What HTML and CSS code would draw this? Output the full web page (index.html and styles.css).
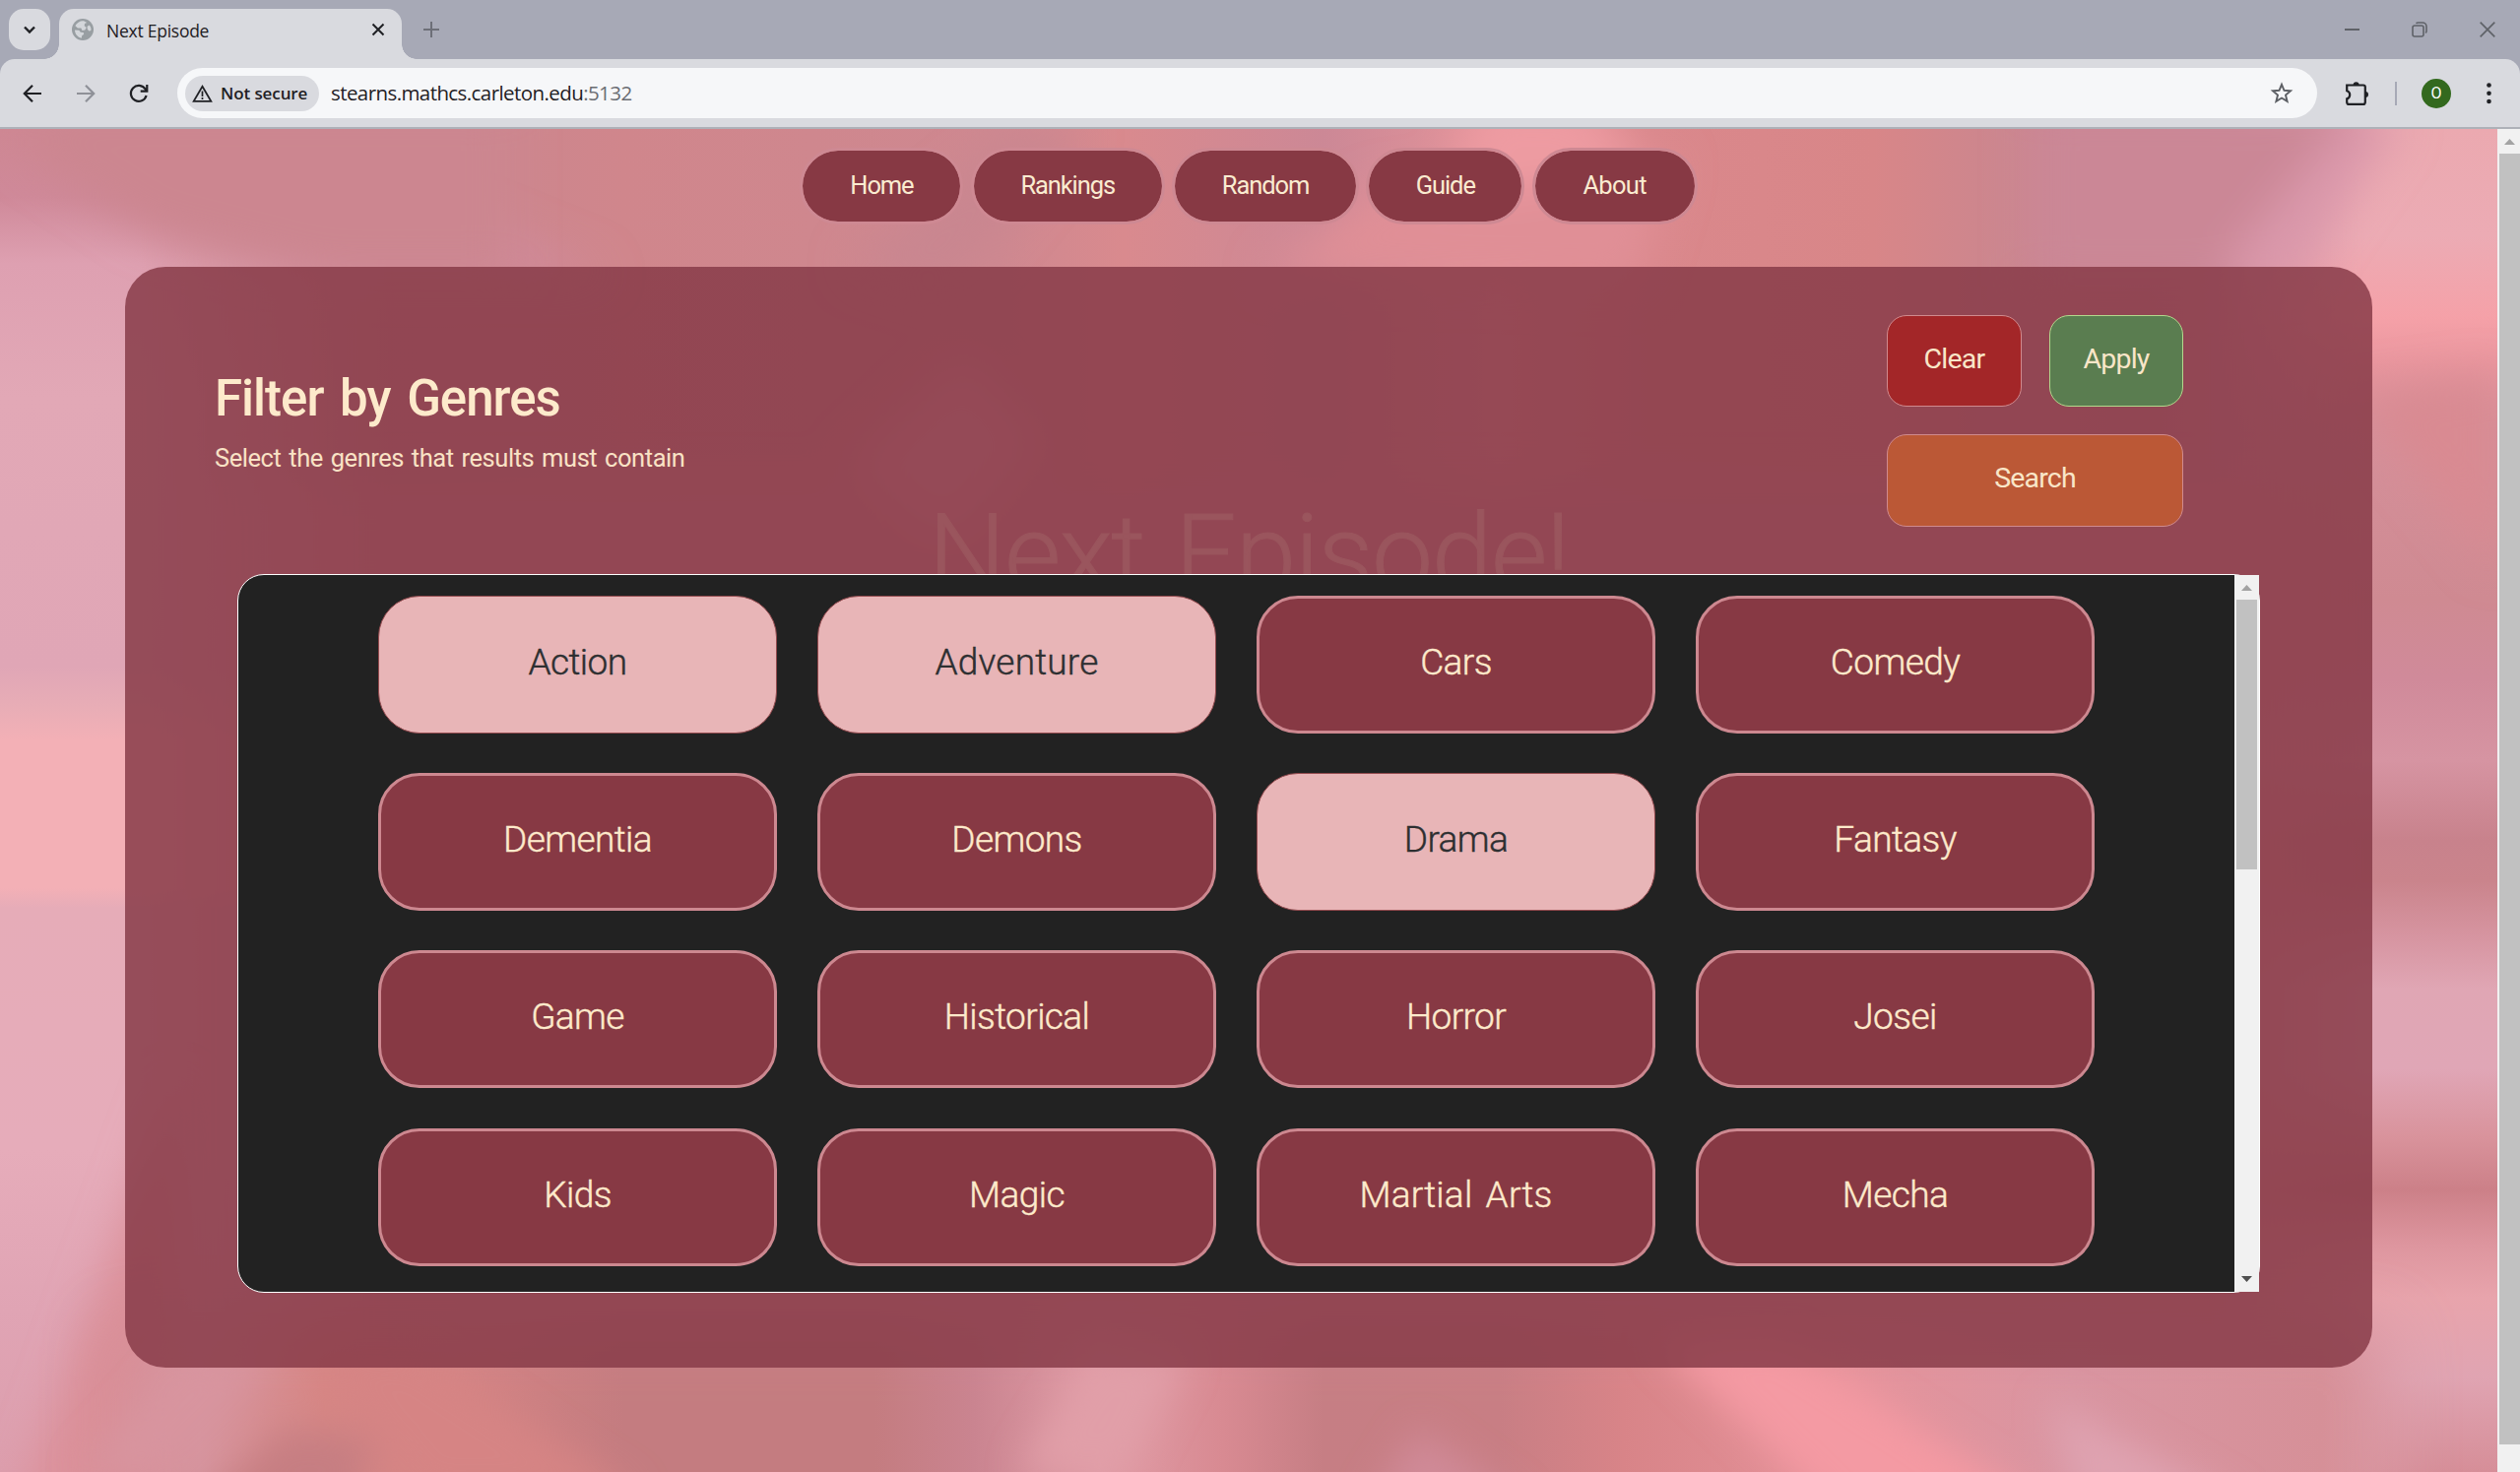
FILE: index.html
```html
<!DOCTYPE html>
<html lang="en">
<head>
<meta charset="utf-8">
<title>Next Episode</title>
<link rel="stylesheet" href="styles.css">
</head>
<body>
<div class="browser">
  <div class="tabstrip">
    <div class="tab-search"><svg width="14" height="14" viewBox="0 0 14 14"><path d="M2 4.500l5 5 5-5" fill="none" stroke="#1f2024" stroke-width="2.400"/></svg></div>
    <div class="tab">
      <svg class="globe" width="22" height="22" viewBox="0 0 22 22"><circle cx="11" cy="11" r="11" fill="#989ea2"/><path d="M12 2.200c-3.400-.4-7 1.700-8.600 5l2.500 2.200 3.400.2 1.200 2.300 2.800-.4 1.400-2.600-2-1.600.3-2.400 2.200-.8zM3 11.500c0 4 2.900 7.500 6.800 8.200l.4-2.400 2-1.500-.5-1.700-2.900-.4-1.500-2zM17.500 6.500l-2 1.500.4 3 2 1.700 1.600-1.200c.1-1.900-.6-3.800-2-5z" fill="#d3d6da"/></svg>
      <span class="tab-title">Next Episode</span>
      <svg class="tab-close" width="14" height="14" viewBox="0 0 14 14"><path d="M1.500 1.500l11 11M12.500 1.500l-11 11" stroke="#1f2024" stroke-width="2"/></svg>
    </div>
    <svg class="new-tab" width="16" height="16" viewBox="0 0 16 16"><path d="M8 0v16M0 8h16" stroke="#6d6f78" stroke-width="2"/></svg>
    <div class="window-buttons">
      <svg width="16" height="16" viewBox="0 0 16 16"><path d="M1 8h15" stroke="#5f6268" stroke-width="2"/></svg>
      <svg width="16" height="16" viewBox="0 0 16 16"><rect x="1" y="4" width="11" height="11" rx="2" fill="none" stroke="#5f6268" stroke-width="1.600"/><path d="M4.500 1.800C5 1.200 5.800 1 6.500 1H11a4 4 0 0 1 4 4v4.500c0 .8-.3 1.500-.9 2" fill="none" stroke="#5f6268" stroke-width="1.600"/></svg>
      <svg width="16" height="16" viewBox="0 0 16 16"><path d="M.7.7l14.600 14.600M15.300.7L.7 15.300" stroke="#5f6268" stroke-width="1.700"/></svg>
    </div>
  </div>
  <div class="toolbar">
    <div class="nav-buttons">
      <svg width="20" height="20" viewBox="0 0 20 20"><path d="M19 10H2.500M10 1.800L1.800 10l8.200 8.200" fill="none" stroke="#1f2024" stroke-width="2.200"/></svg>
      <svg width="20" height="20" viewBox="0 0 20 20"><path d="M1 10h16.500M10 1.800l8.200 8.200-8.200 8.200" fill="none" stroke="#8f9198" stroke-width="2.200"/></svg>
      <svg width="20" height="20" viewBox="0 0 20 20"><path d="M17.600 12A8 8 0 1 1 16.600 5.500L18 7.200M18.300 1v6.700h-6.600" fill="none" stroke="#1f2024" stroke-width="2.200"/></svg>
    </div>
    <div class="omnibox">
      <div class="chip">
        <svg width="21" height="18" viewBox="0 0 21 18"><path d="M10.500 1.800L19.300 16.800H1.700z" fill="none" stroke="#1f2024" stroke-width="1.800"/><path d="M10.500 6.500v5.500M10.500 13v2" stroke="#1f2024" stroke-width="1.700"/></svg>
        <span>Not secure</span>
      </div>
      <div class="url">stearns.mathcs.carleton.edu<span class="port">:5132</span></div>
      <svg class="star" width="24" height="23" viewBox="0 0 24 23"><path d="M12 2.800l2.500 6 6.500.5-5 4.200 1.600 6.400L12 16.500l-5.600 3.400L8 13.500 3 9.300l6.500-.5z" fill="none" stroke="#5c5f64" stroke-width="1.900"/></svg>
    </div>
    <div class="toolbar-right">
      <svg width="25" height="26" viewBox="0 0 25 26"><path d="M2.200 4.500H19a1.800 1.800 0 0 1 1.800 1.800v15.800a1.800 1.800 0 0 1-1.800 1.800H4a1.800 1.800 0 0 1-1.800-1.800v-3.700a4.300 4.300 0 0 0 0-8.200z" fill="none" stroke="#1f2024" stroke-width="2.200"/><path d="M8.600 4.300a3 3 0 0 1 6 0zM21 11a3 3 0 0 1 0 6z" fill="#1f2024"/></svg>
      <i class="divider"></i>
      <span class="avatar">O</span>
      <svg class="kebab" width="5" height="22" viewBox="0 0 5 22"><circle cx="2.500" cy="2.500" r="2.300"/><circle cx="2.500" cy="10.800" r="2.300"/><circle cx="2.500" cy="19" r="2.300"/></svg>
    </div>
  </div>
</div>

<div class="viewport">
  <main class="page">
    <svg class="backdrop" width="2536" height="1364" viewBox="0 0 2536 1364" preserveAspectRatio="none">
      <defs>
        <linearGradient id="gl" x1="0" y1="0" x2="0" y2="1"><stop offset="0" stop-color="#ce8793"/><stop offset=".05" stop-color="#cf8999"/><stop offset=".1" stop-color="#dea0b1"/><stop offset=".2" stop-color="#e2a8b6"/><stop offset=".4" stop-color="#e0a6b6"/><stop offset=".43" stop-color="#e8adb6"/><stop offset=".455" stop-color="#f3b0b6"/><stop offset=".565" stop-color="#f3b0b6"/><stop offset=".58" stop-color="#e6acb8"/><stop offset=".76" stop-color="#e6acba"/><stop offset=".88" stop-color="#e0a4b4"/><stop offset="1" stop-color="#dc9ead"/></linearGradient>
        <linearGradient id="gr" x1="0" y1="0" x2="0" y2="1"><stop offset="0" stop-color="#eba9b0"/><stop offset=".08" stop-color="#ecabb4"/><stop offset=".14" stop-color="#f5a1a8"/><stop offset=".175" stop-color="#e9969e"/><stop offset=".22" stop-color="#d5909a"/><stop offset=".35" stop-color="#cf8a92"/><stop offset=".41" stop-color="#d08a9a"/><stop offset=".47" stop-color="#d694a2"/><stop offset=".53" stop-color="#c8828c"/><stop offset=".56" stop-color="#ca848c"/><stop offset=".6" stop-color="#d694a0"/><stop offset=".64" stop-color="#e0a6b4"/><stop offset=".7" stop-color="#e0a6b6"/><stop offset=".75" stop-color="#d9939c"/><stop offset=".79" stop-color="#cc8088"/><stop offset=".83" stop-color="#dd959e"/><stop offset=".87" stop-color="#e8a4ac"/><stop offset=".93" stop-color="#e0a4b2"/><stop offset="1" stop-color="#d68e98"/></linearGradient>
        <linearGradient id="gt"><stop offset="0" stop-color="#d08a9a"/><stop offset=".08" stop-color="#c9838a"/><stop offset=".17" stop-color="#ca868e"/><stop offset=".25" stop-color="#d0868c"/><stop offset=".4" stop-color="#ce8890"/><stop offset=".45" stop-color="#d98a8e"/><stop offset=".53" stop-color="#cc8896"/><stop offset=".6" stop-color="#e4949a"/><stop offset=".66" stop-color="#da888c"/><stop offset=".75" stop-color="#d88688"/><stop offset=".8" stop-color="#cc868e"/><stop offset=".86" stop-color="#c88490"/><stop offset=".91" stop-color="#d08ea2"/><stop offset=".95" stop-color="#dc9aaa"/><stop offset="1" stop-color="#eeaab2"/></linearGradient>
        <linearGradient id="gb"><stop offset="0" stop-color="#e2a4b2"/><stop offset=".03" stop-color="#d68c94"/><stop offset=".08" stop-color="#d6949e"/><stop offset=".13" stop-color="#d68684"/><stop offset=".18" stop-color="#d48484"/><stop offset=".25" stop-color="#c47c80"/><stop offset=".35" stop-color="#c47c80"/><stop offset=".39" stop-color="#ca8490"/><stop offset=".44" stop-color="#e09ca6"/><stop offset=".49" stop-color="#d88a92"/><stop offset=".53" stop-color="#c67e84"/><stop offset=".6" stop-color="#c87e84"/><stop offset=".65" stop-color="#d88488"/><stop offset=".74" stop-color="#e5939b"/><stop offset=".83" stop-color="#d995a1"/><stop offset=".93" stop-color="#d69098"/><stop offset="1" stop-color="#e0a6b4"/></linearGradient>
        <linearGradient id="fl"><stop offset="0" stop-color="#fff"/><stop offset=".35" stop-color="#fff"/><stop offset="1" stop-color="#000"/></linearGradient>
        <linearGradient id="fr"><stop offset="0" stop-color="#000"/><stop offset=".55" stop-color="#fff"/><stop offset="1" stop-color="#fff"/></linearGradient>
        <filter id="soft" x="-20%" y="-20%" width="140%" height="140%"><feGaussianBlur stdDeviation="22"/></filter>
        <filter id="fine" x="-20%" y="-20%" width="140%" height="140%"><feGaussianBlur stdDeviation="18"/></filter>
        <filter id="wide" x="-20%" y="-50%" width="140%" height="200%"><feGaussianBlur stdDeviation="32"/></filter>
        <mask id="ml"><rect width="400" height="1364" fill="url(#fl)"/></mask>
        <mask id="mr"><rect x="2240" width="296" height="1364" fill="url(#fr)"/></mask>
        <mask id="mb"><rect x="110" y="1215" width="2320" height="320" fill="#fff" filter="url(#wide)"/></mask>
      </defs>
      <rect width="2536" height="1364" fill="#d68c96"/>
      <rect width="2536" height="420" fill="url(#gt)"/>
      <g filter="url(#soft)">
        <path d="M100 360H2400V480H100z" fill="#d48a94"/>
        <path d="M860 140L1040 0H1100L960 170z" fill="#c98690"/>
        <path d="M1280 150L1400 60 1700 30 1660 160z" fill="#e08f96"/>
        <path d="M1500 -30h110l60 70-200 30z" fill="#ee9ba2"/>
        <path d="M200 150L420 70 620 150z" fill="#d18b9c"/>
        <path d="M860 340L980 230 1060 320 960 420z" fill="#e09aa6"/>
      </g>
      <rect y="0" width="400" height="1364" fill="url(#gl)" mask="url(#ml)"/>
      <g filter="url(#soft)"><path d="M60 -30H520V150H330L150 105 20 20z" fill="#cc8690"/></g>
      <rect x="2240" width="296" height="1364" fill="url(#gr)" mask="url(#mr)"/>
      <g filter="url(#soft)">
        <path d="M2060 -30h350l-60 90-90 100h-200z" fill="#cb8796"/>
        <path d="M2536 250v200l-90-110-60-70z" fill="#d98a92"/>
        <path d="M2380 -10h60l-110 160h-80z" fill="#da98ab"/>
        <path d="M180 960v440H20z" fill="#dc9099"/>
      </g>
      <g mask="url(#mb)"><rect width="2536" y="1100" height="264" fill="url(#gb)"/></g>
      <g filter="url(#fine)">
        <path d="M190 1245h90l-120 120H80z" fill="#d8949f"/>
        <path d="M310 1240h110l230 150H430z" fill="#d68484"/>
        <path d="M290 1320l90 10-20 70H200z" fill="#c67e82"/>
        <path d="M1110 1245h95l-60 120h-110z" fill="#e19fa8"/>
        <path d="M1440 1320l110 80h-160z" fill="#d08a98"/>
        <path d="M1680 1230h130l280 180h-220z" fill="#f49aa3"/>
        <path d="M2080 1290l200 110h-170z" fill="#dfa3b1"/>
      </g>
    </svg>
    <div class="content">
      <nav class="menu">
        <a>Home</a><a>Rankings</a><a>Random</a><a>Guide</a><a>About</a>
      </nav>
      <section class="panel">
        <div class="hero-title">Next Episode!</div>
        <header class="panel-head">
          <div>
            <h1>Filter by Genres</h1>
            <p>Select the genres that results must contain</p>
          </div>
          <div class="actions">
            <button class="act clear">Clear</button>
            <button class="act apply">Apply</button>
            <button class="act search">Search</button>
          </div>
        </header>
        <div class="list">
          <div class="grid">
            <div class="tile on">Action</div><div class="tile on wide">Adventure</div><div class="tile">Cars</div><div class="tile">Comedy</div>
            <div class="tile">Dementia</div><div class="tile">Demons</div><div class="tile on">Drama</div><div class="tile">Fantasy</div>
            <div class="tile">Game</div><div class="tile">Historical</div><div class="tile">Horror</div><div class="tile">Josei</div>
            <div class="tile">Kids</div><div class="tile">Magic</div><div class="tile wide">Martial Arts</div><div class="tile">Mecha</div>
          </div>
          <div class="scroll inner"><i class="up"></i><i class="thumb"></i><i class="down"></i></div>
        </div>
      </section>
    </div>
  </main>
  <div class="scroll outer"><i class="up"></i><i class="thumb"></i></div>
</div>
</body>
</html>
```
FILE: styles.css
```css
* { box-sizing: border-box; }
html, body { height: 100%; }
body {
  margin: 0;
  display: flex;
  flex-direction: column;
  overflow: hidden;
  background: #d0868e;
  font-family: Roboto, "Liberation Sans", sans-serif;
}
svg { display: block; flex: none; }

/* browser chrome */
.browser { flex: none; height: 131px; background: #a7a9b6; font-family: "Open Sans", "Noto Sans", sans-serif; color: #1f2024; }
.tabstrip { height: 60px; display: flex; padding: 9px 0 0 9px; }
.tab-search { width: 42px; height: 42px; border-radius: 15px; background: #d9dadf; display: grid; place-items: center; }
.tab {
  position: relative;
  width: 348px; height: 51px; margin-left: 9px; padding: 0 17px 10px 13px;
  border-radius: 15px 15px 0 0; background: #d9dadf;
  display: flex; align-items: center;
}
.tab::before, .tab::after { content: ""; position: absolute; bottom: 0; width: 15px; height: 15px; }
.tab::before { left: -15px; background: radial-gradient(circle at 0 0, transparent 14.5px, #d9dadf 15px); }
.tab::after { right: -15px; background: radial-gradient(circle at 100% 0, transparent 14.5px, #d9dadf 15px); }
.tab-title { margin-left: 13px; padding-top: 2px; font-size: 17.500px; letter-spacing: -0.250px; }
.tab-close { margin-left: auto; }
.new-tab { margin: 13px 0 0 22px; }
.window-buttons { margin-left: auto; display: flex; gap: 53px; padding: 13px 25px 0 0; }
.toolbar {
  height: 71px; display: flex; align-items: center;
  background: #d9dadf; border-bottom: 2px solid #aeb1b8; border-radius: 15px 15px 0 0;
}
.nav-buttons { width: 180px; display: flex; gap: 34px; padding-left: 23px; }
.omnibox {
  width: 2173px; height: 51px; border-radius: 26px; background: #f6f7f9;
  display: flex; align-items: center; padding: 0 24px 0 8px;
}
.chip {
  width: 136px; height: 36px; border-radius: 18px; background: #d9dadf;
  display: flex; align-items: center; gap: 8px; padding-left: 7px;
  font-size: 17px; font-weight: 600; letter-spacing: -0.100px; white-space: nowrap;
}
.url { margin-left: 12px; padding-bottom: 1px; font-size: 20.500px; letter-spacing: -0.580px; white-space: nowrap; }
.port { color: #6a6d73; }
.star { margin-left: auto; }
.toolbar-right { flex: 1; display: flex; align-items: center; padding-left: 28px; }
.divider { width: 2px; height: 24px; margin-left: 26px; background: #a7a9b6; }
.avatar {
  width: 30px; height: 30px; margin-left: 25px; border-radius: 50%; background: #33691e; color: #fff;
  display: grid; place-items: center; font: 16px Roboto, sans-serif;
}
.kebab { margin-left: 36px; fill: #1f2024; }

/* page */
.viewport { flex: 1; min-height: 0; display: flex; }
.page { width: 2536px; flex: none; display: grid; overflow: hidden; }
.backdrop, .content { grid-area: 1 / 1; }
.content { position: relative; display: flex; flex-direction: column; align-items: center; padding-top: 19px; }
.menu { display: flex; gap: 7.300px; height: 78px; }
.menu a {
  border: 3px solid #ce8993; border-radius: 39px; background: #873944; background-clip: padding-box;
  color: #faebd0; font-size: 25.500px; line-height: 70px; letter-spacing: -1.100px; text-align: center;
}
.menu a:nth-child(1) { width: 166px; }
.menu a:nth-child(2) { width: 197px; }
.menu a:nth-child(3) { width: 190px; }
.menu a:nth-child(4) { width: 161px; }
.menu a:nth-child(5) { width: 168px; letter-spacing: -0.700px; }
.panel {
  position: relative; width: 2282px; height: 1118px; margin-top: 43px; padding: 49px 114px 0;
  border-radius: 41px; background: rgba(135, 58, 71, .84);
}
.hero-title {
  position: absolute; left: 0; right: 0; top: 226px; text-align: center;
  font-size: 111px; line-height: 132px; letter-spacing: -1.500px; word-spacing: 5px; color: #9a555d; font-weight: 300;
  -webkit-text-stroke: 1px #9a555d;
}
.panel-head { position: relative; height: 263px; display: flex; justify-content: space-between; padding: 0 78px 0 0; margin-left: -23px; }
h1 { margin: 55px 0 0; font-size: 51px; line-height: 60px; letter-spacing: -1px; word-spacing: 5px; font-weight: 500; color: #fdeacb; }
p { margin: 15px 0 0; font-size: 25.500px; line-height: 30px; color: #f9e2c5; letter-spacing: -0.450px; word-spacing: 2px; }
.actions { display: grid; grid-template: 93px 94px / 137px 136px; gap: 28px; }
.act { padding: 0 0 5px; border: 1px solid #d08a8e; border-radius: 20px; color: #f9e6c8; font: 28.500px Roboto, sans-serif; letter-spacing: -0.800px; }
.clear { background: #a32628; }
.apply { background: #5a7d50; border-color: #b3d88c; }
.search { grid-column: span 2; background: #bb5836; }
.list {
  position: relative; width: 2054px; height: 730px; border: 1px solid #fff; border-radius: 27px; background: #222;
  display: flex;
}
.grid { width: 2027px; padding: 21px 0 0 142px; display: grid; grid-template-columns: repeat(4, 405px); grid-auto-rows: 140px; column-gap: 41px; row-gap: 40.200px; }
.tile {
  display: grid; place-items: center; padding-bottom: 5px; border: 3px solid #cd8890; border-radius: 42px;
  background: #873944; color: #fdeacb; font-size: 37px; font-weight: 300; letter-spacing: -0.600px; word-spacing: 4px;
  -webkit-text-stroke: .4px;
}
.tile.on { border: 1px solid #934a4e; background: #e8b5b7; color: #2d2f31; }
.tile.wide { letter-spacing: .2px; }

/* scrollbars */
.scroll { display: flex; flex-direction: column; align-items: center; background: #f1f1f1; }
.scroll i { display: block; flex: none; }
.inner { width: 25px; height: 728px; }
.up { width: 11px; height: 6px; margin-top: 10px; background: #a3a3a3; clip-path: polygon(50% 0, 100% 100%, 0 100%); }
.down { width: 11px; height: 6px; margin: auto 0 10px; background: #505050; clip-path: polygon(0 0, 100% 0, 50% 100%); }
.thumb { width: 21px; margin-top: 9px; background: #c1c1c1; }
.inner .thumb { height: 274px; }
.outer { width: 23px; flex: none; align-items: flex-end; }
.outer .up { margin-right: 5px; }
.outer .thumb { height: 1311px; }
```
